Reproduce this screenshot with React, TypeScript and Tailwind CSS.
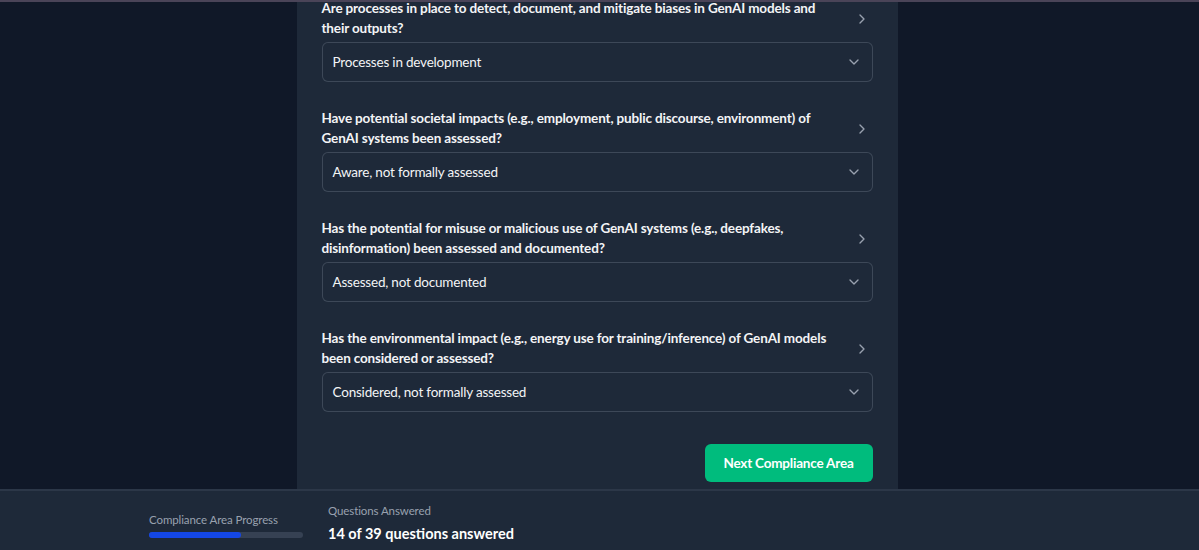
import { ChevronDown, ChevronRight } from "lucide-react";

const questions = [
    {
        text: "Are processes in place to detect, document, and mitigate biases in GenAI models and their outputs?",
        answer: "Processes in development",
    },
    {
        text: "Have potential societal impacts (e.g., employment, public discourse, environment) of GenAI systems been assessed?",
        answer: "Aware, not formally assessed",
    },
    {
        text: "Has the potential for misuse or malicious use of GenAI systems (e.g., deepfakes, disinformation) been assessed and documented?",
        answer: "Assessed, not documented",
    },
    {
        text: "Has the environmental impact (e.g., energy use for training/inference) of GenAI models been considered or assessed?",
        answer: "Considered, not formally assessed",
    },
];

function Question({ text, answer }: { text: string; answer: string }) {
    return (
        <div className="mb-[27px]">
            <div className="flex items-center justify-between gap-6 mb-1">
                <p className="text-[13.5px] leading-[19.5px] font-bold tracking-[-0.15px] text-gray-100 max-w-[505px]">{text}</p>
                <ChevronRight className="w-4 h-4 text-gray-400 shrink-0 mr-[3px]" />
            </div>
            <div className="h-10 rounded-md border border-gray-600/70 bg-gray-800 flex items-center justify-between px-2.5">
                <span className="text-[13.5px] tracking-[-0.2px] text-gray-100">{answer}</span>
                <ChevronDown className="w-4 h-4 text-gray-400" />
            </div>
        </div>
    );
}

export default function App() {
    return (
        <div
            className="h-[550px] overflow-hidden bg-gray-900 flex flex-col"
            style={{ fontFamily: 'Lato, "Noto Sans", sans-serif' }}
        >
            <div className="h-[2px] bg-[#4a4458] shrink-0" />
            <div className="flex-1 flex justify-center overflow-hidden pr-[5px]">
                <div className="w-[601px] bg-gray-800 px-[25px] -mt-[3px]">
                    {questions.map((q) => (
                        <Question key={q.answer} text={q.text} answer={q.answer} />
                    ))}
                    <div className="flex justify-end mt-[32px]">
                        <button className="h-[38px] w-[168px] rounded-md bg-emerald-500 text-white text-[13.5px] tracking-[-0.2px] font-bold">
                            Next Compliance Area
                        </button>
                    </div>
                </div>
            </div>
            <div className="h-[61px] shrink-0 bg-gray-800 border-t-2 border-gray-700/60 flex items-center">
                <div className="w-[154px] ml-[149px] mt-[8px]">
                    <p className="text-[11.5px] tracking-[-0.1px] text-gray-400 mb-[3px]">Compliance Area Progress</p>
                    <div className="h-1.5 rounded-full bg-gray-700">
                        <div className="h-full rounded-full bg-blue-700" style={{ width: "60%" }} />
                    </div>
                </div>
                <div className="ml-[25px] mt-[6px]">
                    <p className="text-[11.5px] tracking-[-0.1px] text-gray-400">Questions Answered</p>
                    <p className="text-[14.5px] font-bold text-white mt-[4px]">14 of 39 questions answered</p>
                </div>
            </div>
        </div>
    );
}
